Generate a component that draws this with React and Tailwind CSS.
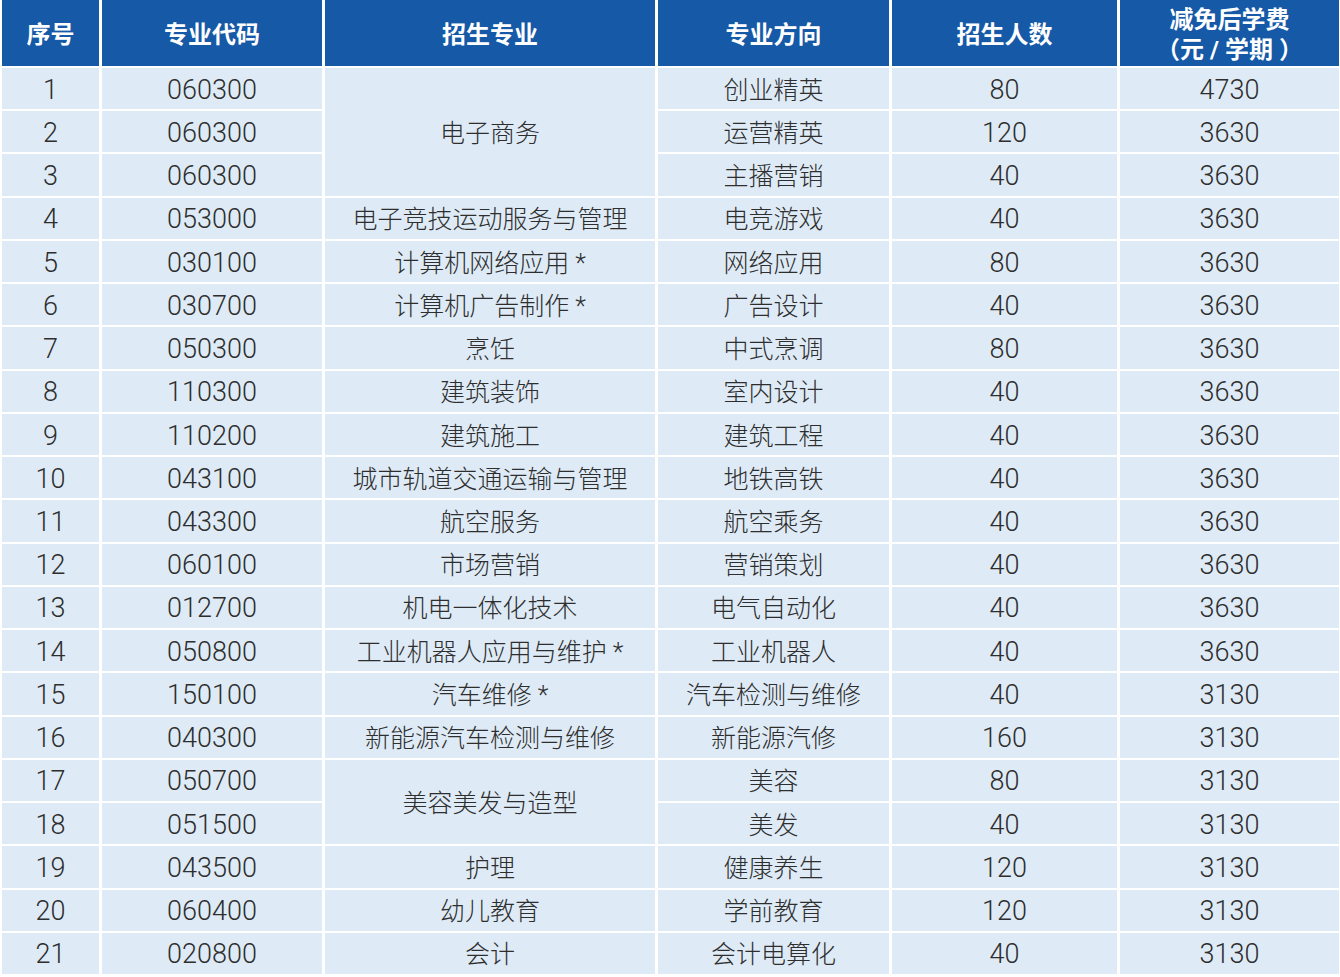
import React from 'react'

const rows = [
  ['1', '060300', null, '创业精英', '80', '4730'],
  ['2', '060300', null, '运营精英', '120', '3630'],
  ['3', '060300', null, '主播营销', '40', '3630'],
  ['4', '053000', '电子竞技运动服务与管理', '电竞游戏', '40', '3630'],
  ['5', '030100', '计算机网络应用 *', '网络应用', '80', '3630'],
  ['6', '030700', '计算机广告制作 *', '广告设计', '40', '3630'],
  ['7', '050300', '烹饪', '中式烹调', '80', '3630'],
  ['8', '110300', '建筑装饰', '室内设计', '40', '3630'],
  ['9', '110200', '建筑施工', '建筑工程', '40', '3630'],
  ['10', '043100', '城市轨道交通运输与管理', '地铁高铁', '40', '3630'],
  ['11', '043300', '航空服务', '航空乘务', '40', '3630'],
  ['12', '060100', '市场营销', '营销策划', '40', '3630'],
  ['13', '012700', '机电一体化技术', '电气自动化', '40', '3630'],
  ['14', '050800', '工业机器人应用与维护 *', '工业机器人', '40', '3630'],
  ['15', '150100', '汽车维修 *', '汽车检测与维修', '40', '3130'],
  ['16', '040300', '新能源汽车检测与维修', '新能源汽修', '160', '3130'],
  ['17', '050700', null, '美容', '80', '3130'],
  ['18', '051500', null, '美发', '40', '3130'],
  ['19', '043500', '护理', '健康养生', '120', '3130'],
  ['20', '060400', '幼儿教育', '学前教育', '120', '3130'],
  ['21', '020800', '会计', '会计电算化', '40', '3130'],
]

const cell = 'bg-[#deebf6] flex items-center justify-center pt-[3px] leading-none text-[#2e2e2e] min-h-0'
const num = 'text-[27px] font-light'
const cjk = 'text-[25px] font-light'
const head = 'bg-[#1559a7] flex items-center justify-center pt-[3px] text-white font-bold text-[24px] text-center leading-[30px]'

export default function App() {
  return (
    <div
      className="w-[1340px] h-[977px] bg-white pl-[2px] pr-[1px] overflow-hidden"
      style={{ fontFamily: 'Roboto, "Noto Sans CJK SC", "Noto Sans", sans-serif' }}
    >
      <div className="grid h-[974px] grid-cols-[97px_220px_330px_231px_225px_1fr] grid-rows-[66px_repeat(21,minmax(0,1fr))] gap-x-[3px] gap-y-[2px]">
        <div className={head}>序号</div>
        <div className={head}>专业代码</div>
        <div className={head}>招生专业</div>
        <div className={head}>专业方向</div>
        <div className={head}>招生人数</div>
        <div className={head + ' flex-col pt-0'}>
          <span>减免后学费</span>
          <span>（元 / 学期 ）</span>
        </div>

        {rows.map((r, i) => (
          <React.Fragment key={i}>
            <div className={`${cell} ${num}`}>{r[0]}</div>
            <div className={`${cell} ${num}`}>{r[1]}</div>
            {i === 0 && (
              <div className={`${cell} ${cjk} row-span-3`}>电子商务</div>
            )}
            {i === 16 && (
              <div className={`${cell} ${cjk} row-span-2`}>美容美发与造型</div>
            )}
            {r[2] && <div className={`${cell} ${cjk}`}>{r[2]}</div>}
            <div className={`${cell} ${cjk}`}>{r[3]}</div>
            <div className={`${cell} ${num}`}>{r[4]}</div>
            <div className={`${cell} ${num}`}>{r[5]}</div>
          </React.Fragment>
        ))}
      </div>
    </div>
  )
}
